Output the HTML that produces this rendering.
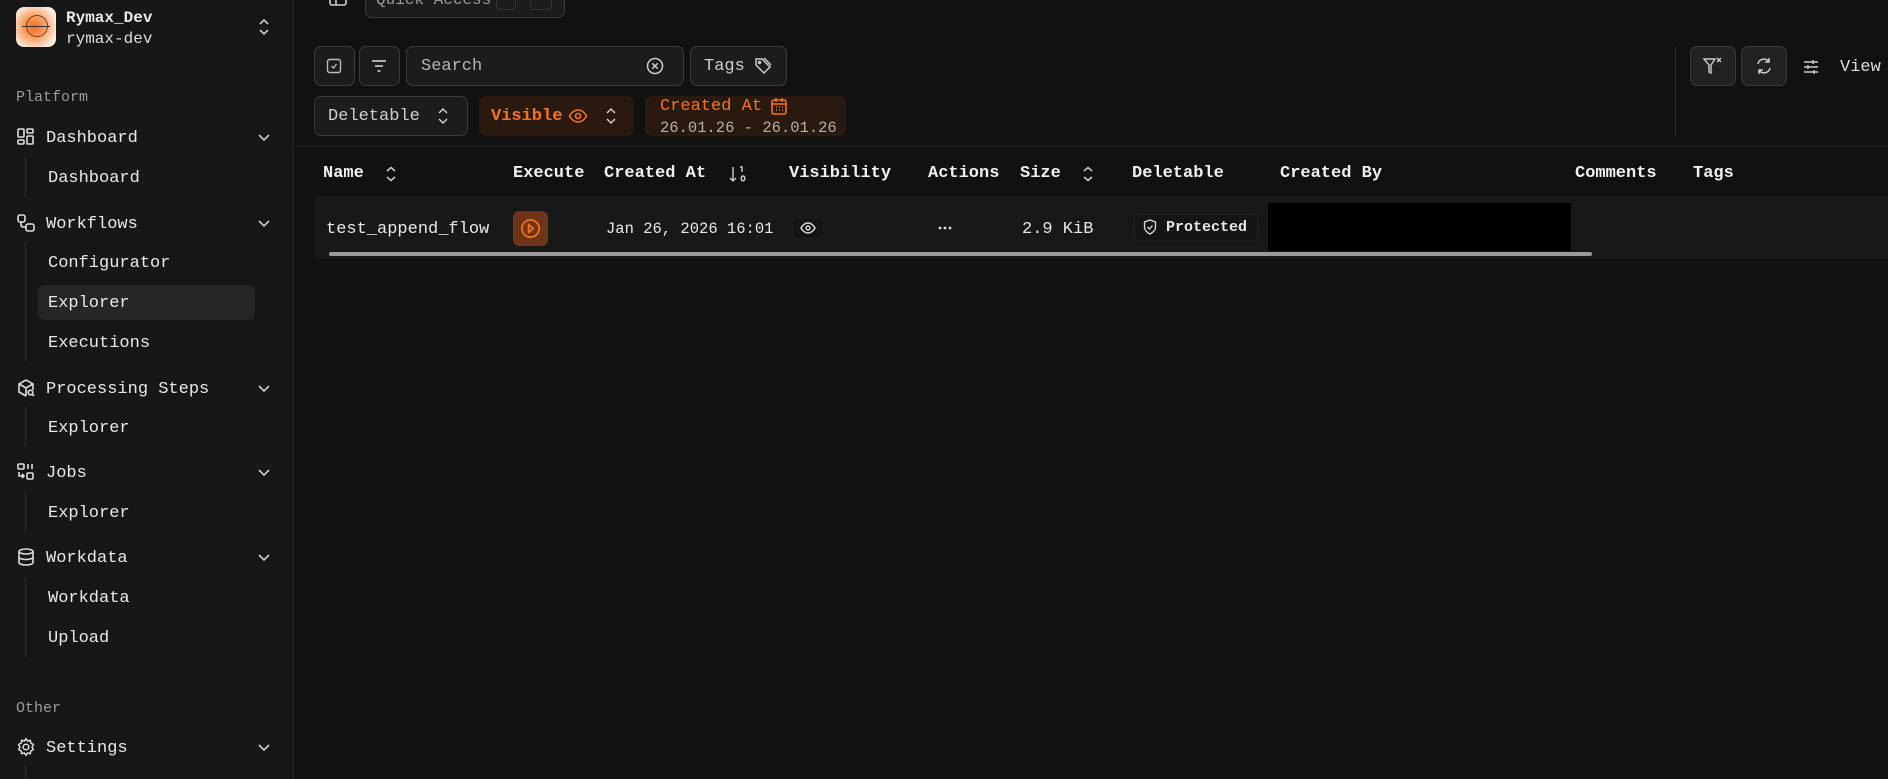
<!DOCTYPE html>
<html><head><meta charset="utf-8"><style>
*{box-sizing:border-box;margin:0;padding:0}
body{width:1888px;height:779px;background:#111111;color:#e8e8e8;font-family:"Liberation Mono","DejaVu Sans Mono",monospace;font-size:17px;position:relative;overflow:hidden}
.a{position:absolute;white-space:nowrap}
.t{position:absolute;height:28px;line-height:28px;white-space:nowrap}
#sb{position:absolute;left:0;top:0;width:294px;height:779px;background:#171717;border-right:1px solid #262626}
.ic{position:absolute;width:20px;height:20px}
.chev{position:absolute;left:256px;width:16px;height:16px}
.vl{position:absolute;left:25px;width:1px;background:#2e2e2e}
.btn{position:absolute;border:1px solid #3a3a3a;background:#1c1c1c;border-radius:7px}
.hd{position:absolute;top:160px;height:28px;line-height:28px;font-weight:bold;color:#f0f0f0}
svg{display:block}
</style></head><body>
<div id="sb">
 <div class="a" style="left:16px;top:7px;width:40px;height:40px;border-radius:8px;background:radial-gradient(circle at 45% 50%,#f26a1d 0,#f7a56b 40%,#fde8d8 75%,#fff 100%)">
  <div class="a" style="left:6px;top:19px;width:28px;height:1px;background:#333"></div>
  <div class="a" style="left:10px;top:8px;width:22px;height:22px;border:1px solid #7a3a14;border-radius:50%"></div>
 </div>
 <div class="t" style="left:66px;top:4px;font-weight:bold;font-size:16px">Rymax_Dev</div>
 <div class="t" style="left:66px;top:25px;font-size:16px;color:#ddd">rymax-dev</div>
 <svg class="a" style="left:256px;top:17px" width="16" height="20" viewBox="0 0 16 20"><path d="M4 7l4-4 4 4M4 13l4 4 4-4" stroke="#ccc" stroke-width="1.6" fill="none"/></svg>
 <div class="t" style="left:16px;top:84px;font-size:15px;color:#9a9a9a">Platform</div>

 <svg class="ic" style="left:16px;top:127px" viewBox="0 0 20 20" fill="none" stroke="#ddd" stroke-width="1.6"><rect x="2" y="2" width="6" height="8" rx="1"/><rect x="11" y="2" width="6" height="4" rx="1"/><rect x="11" y="9" width="6" height="8" rx="1"/><rect x="2" y="13" width="6" height="4" rx="1"/></svg>
 <div class="t" style="left:46px;top:125px">Dashboard</div>
 <svg class="chev" style="top:129px" viewBox="0 0 16 16"><path d="M3 6l5 5 5-5" stroke="#ccc" stroke-width="1.6" fill="none"/></svg>
 <div class="vl" style="top:157px;height:40px"></div>
 <div class="t" style="left:48px;top:165px">Dashboard</div>

 <svg class="ic" style="left:16px;top:213px" viewBox="0 0 20 20" fill="none" stroke="#ddd" stroke-width="1.6"><rect x="2" y="2" width="7" height="7" rx="2"/><rect x="10" y="11" width="8" height="7" rx="2"/><path d="M5 9v3a2 2 0 0 0 2 2h3"/></svg>
 <div class="t" style="left:46px;top:211px">Workflows</div>
 <svg class="chev" style="top:215px" viewBox="0 0 16 16"><path d="M3 6l5 5 5-5" stroke="#ccc" stroke-width="1.6" fill="none"/></svg>
 <div class="vl" style="top:242px;height:120px"></div>
 <div class="t" style="left:48px;top:250px">Configurator</div>
 <div class="a" style="left:38px;top:285px;width:217px;height:35px;background:#262626;border-radius:7px"></div>
 <div class="t" style="left:48px;top:290px">Explorer</div>
 <div class="t" style="left:48px;top:330px">Executions</div>

 <svg class="ic" style="left:16px;top:378px" viewBox="0 0 20 20" fill="none" stroke="#ddd" stroke-width="1.6"><path d="M10 2l7 4v6M10 2L3 6v8l7 4M3 6l7 4 7-4M10 10v8"/><circle cx="14.5" cy="14.5" r="2.3"/><path d="M16 16l2 2"/></svg>
 <div class="t" style="left:46px;top:376px">Processing Steps</div>
 <svg class="chev" style="top:380px" viewBox="0 0 16 16"><path d="M3 6l5 5 5-5" stroke="#ccc" stroke-width="1.6" fill="none"/></svg>
 <div class="vl" style="top:407px;height:40px"></div>
 <div class="t" style="left:48px;top:415px">Explorer</div>

 <svg class="ic" style="left:16px;top:462px" viewBox="0 0 20 20" fill="none" stroke="#ddd" stroke-width="1.6"><rect x="2" y="2" width="6" height="5" rx="1"/><rect x="11" y="11" width="6" height="6" rx="1"/><path d="M12 2v5M16 2v5M3 10v4h5M6 12l2 2-2 2"/></svg>
 <div class="t" style="left:46px;top:460px">Jobs</div>
 <svg class="chev" style="top:464px" viewBox="0 0 16 16"><path d="M3 6l5 5 5-5" stroke="#ccc" stroke-width="1.6" fill="none"/></svg>
 <div class="vl" style="top:492px;height:40px"></div>
 <div class="t" style="left:48px;top:500px">Explorer</div>

 <svg class="ic" style="left:16px;top:547px" viewBox="0 0 20 20" fill="none" stroke="#ddd" stroke-width="1.6"><ellipse cx="10" cy="4.5" rx="7" ry="2.5"/><path d="M3 4.5v11c0 1.4 3 2.5 7 2.5s7-1.1 7-2.5v-11M3 10c0 1.4 3 2.5 7 2.5s7-1.1 7-2.5"/></svg>
 <div class="t" style="left:46px;top:545px">Workdata</div>
 <svg class="chev" style="top:549px" viewBox="0 0 16 16"><path d="M3 6l5 5 5-5" stroke="#ccc" stroke-width="1.6" fill="none"/></svg>
 <div class="vl" style="top:577px;height:80px"></div>
 <div class="t" style="left:48px;top:585px">Workdata</div>
 <div class="t" style="left:48px;top:625px">Upload</div>

 <div class="t" style="left:16px;top:695px;font-size:15px;color:#9a9a9a">Other</div>
 <svg class="ic" style="left:16px;top:737px" viewBox="0 0 20 20" fill="none" stroke="#ddd" stroke-width="1.5"><circle cx="10" cy="10" r="2.8"/><path d="M10 1.8l1.6 2.2 2.7-.6.6 2.7 2.4 1.3-1.2 2.6 1.2 2.6-2.4 1.3-.6 2.7-2.7-.6L10 18.2 8.4 16l-2.7.6-.6-2.7-2.4-1.3L3.9 10 2.7 7.4l2.4-1.3.6-2.7 2.7.6z"/></svg>
 <div class="t" style="left:46px;top:735px">Settings</div>
 <svg class="chev" style="top:739px" viewBox="0 0 16 16"><path d="M3 6l5 5 5-5" stroke="#ccc" stroke-width="1.6" fill="none"/></svg>
 <div class="vl" style="top:765px;height:14px"></div>
</div>

<!-- top -->
<svg class="a" style="left:328px;top:-8px" width="20" height="16" viewBox="0 0 20 16" fill="none" stroke="#ccc" stroke-width="1.6"><rect x="2" y="0" width="16" height="13" rx="2"/><path d="M2 6h16M8 0v13"/></svg>
<div class="btn" style="left:365px;top:-8px;width:200px;height:26px;border-radius:7px"></div>
<div class="t" style="left:376px;top:-14px;color:#9a9a9a;font-size:16px">Quick Access</div>
<div class="a" style="left:496px;top:-8px;width:20px;height:18px;border:1px solid #333;border-radius:4px"></div>
<div class="a" style="left:530px;top:-8px;width:22px;height:18px;border:1px solid #333;border-radius:4px"></div>

<!-- toolbar -->
<div class="btn" style="left:314px;top:46px;width:41px;height:40px"></div>
<svg class="a" style="left:326px;top:58px" width="16" height="16" viewBox="0 0 16 16" fill="none" stroke="#bbb" stroke-width="1.4"><rect x="1.5" y="1.5" width="13" height="13" rx="2"/><path d="M5.5 8l2 2 3-4"/></svg>
<div class="btn" style="left:359px;top:46px;width:41px;height:40px"></div>
<svg class="a" style="left:369px;top:57px" width="20" height="18" viewBox="0 0 20 18" stroke="#ddd" stroke-width="1.6"><path d="M3 4h14M6 9h8M8.5 14h3"/></svg>
<div class="btn" style="left:406px;top:46px;width:278px;height:40px"></div>
<div class="t" style="left:421px;top:53px;color:#b5b5b5">Search</div>
<svg class="a" style="left:646px;top:57px" width="18" height="18" viewBox="0 0 18 18" fill="none" stroke="#ccc" stroke-width="1.5"><circle cx="9" cy="9" r="7.5"/><path d="M6.3 6.3l5.4 5.4M11.7 6.3l-5.4 5.4"/></svg>
<div class="btn" style="left:690px;top:46px;width:97px;height:40px"></div>
<div class="t" style="left:704px;top:53px;color:#cfcfcf">Tags</div>
<svg class="a" style="left:753px;top:56px" width="20" height="20" viewBox="0 0 20 20" fill="none" stroke="#ccc" stroke-width="1.5"><path d="M3 3h6l8 8-6 6-8-8z"/><circle cx="6.5" cy="6.5" r="1"/><path d="M11 2l7 7"/></svg>

<div class="btn" style="left:314px;top:96px;width:154px;height:40px"></div>
<div class="t" style="left:328px;top:103px;color:#cfcfcf">Deletable</div>
<svg class="a" style="left:436px;top:106px" width="14" height="20" viewBox="0 0 14 20"><path d="M3 7l4-4 4 4M3 13l4 4 4-4" stroke="#ccc" stroke-width="1.5" fill="none"/></svg>
<div class="a" style="left:479px;top:96px;width:155px;height:40px;background:#2a190f;border-radius:7px"></div>
<div class="t" style="left:491px;top:103px;color:#f97316;font-weight:bold">Visible</div>
<svg class="a" style="left:568px;top:106px" width="20" height="20" viewBox="0 0 20 20" fill="none" stroke="#f97316" stroke-width="1.6"><path d="M1.5 10s3-6 8.5-6 8.5 6 8.5 6-3 6-8.5 6-8.5-6-8.5-6z"/><circle cx="10" cy="10" r="2.5"/></svg>
<svg class="a" style="left:604px;top:106px" width="14" height="20" viewBox="0 0 14 20"><path d="M3 7l4-4 4 4M3 13l4 4 4-4" stroke="#ccc" stroke-width="1.5" fill="none"/></svg>
<div class="a" style="left:645px;top:96px;width:201px;height:40px;background:#2a190f;border-radius:7px"></div>
<div class="t" style="left:660px;top:93px;color:#f97316">Created At</div>
<svg class="a" style="left:770px;top:96px" width="18" height="20" viewBox="0 0 18 20" fill="none" stroke="#f97316" stroke-width="1.6"><rect x="2" y="4" width="14" height="14" rx="2"/><path d="M2 8h14M6 2v4M12 2v4M6 11h1M9 11h1M12 11h1M6 14h1M9 14h1M12 14h1"/></svg>
<div class="t" style="left:660px;top:118px;color:#b0b0b0;font-size:15.5px;height:20px;line-height:20px">26.01.26 - 26.01.26</div>

<div class="a" style="left:1675px;top:46px;width:1px;height:90px;background:#262626"></div>
<div class="btn" style="left:1690px;top:46px;width:46px;height:40px;background:#222"></div>
<svg class="a" style="left:1702px;top:56px" width="22" height="20" viewBox="0 0 22 20" fill="none" stroke="#ccc" stroke-width="1.4"><path d="M2 3h11l-4 6v8l-2-1V9z"/><path d="M15 2l4 4M19 2l-4 4"/></svg>
<div class="btn" style="left:1741px;top:46px;width:46px;height:40px;background:#222"></div>
<svg class="a" style="left:1754px;top:56px" width="20" height="20" viewBox="0 0 20 20" fill="none" stroke="#ccc" stroke-width="1.5"><path d="M4 8a6 6 0 0 1 11-2M16 12a6 6 0 0 1-11 2M15 2v4h-4M5 18v-4h4"/></svg>
<svg class="a" style="left:1802px;top:58px" width="18" height="18" viewBox="0 0 18 18" stroke="#ccc" stroke-width="1.4"><path d="M2 4h14M2 9h14M2 14h14M11 2v4M6 7v4M12 12v4"/></svg>
<div class="t" style="left:1840px;top:54px;color:#ddd">View</div>

<!-- table -->
<div class="a" style="left:295px;top:146px;width:1593px;height:1px;background:#1f1f1c"></div>
<div class="hd" style="left:323px">Name</div>
<svg class="a" style="left:384px;top:164px" width="14" height="20" viewBox="0 0 14 20"><path d="M3 7l4-3.5 4 3.5M3 13l4 3.5 4-3.5" stroke="#ccc" stroke-width="1.5" fill="none"/></svg>
<div class="hd" style="left:513px">Execute</div>
<div class="hd" style="left:604px">Created At</div>
<svg class="a" style="left:728px;top:164px" width="20" height="20" viewBox="0 0 20 20" fill="none" stroke="#ccc" stroke-width="1.4"><path d="M5 3v14M2 14l3 3 3-3M12 3h2v5M15 12a1.8 2.4 0 1 0 0.01 0"/></svg>
<div class="hd" style="left:789px">Visibility</div>
<div class="hd" style="left:928px">Actions</div>
<div class="hd" style="left:1020px">Size</div>
<svg class="a" style="left:1081px;top:164px" width="14" height="20" viewBox="0 0 14 20"><path d="M3 7l4-3.5 4 3.5M3 13l4 3.5 4-3.5" stroke="#ccc" stroke-width="1.5" fill="none"/></svg>
<div class="hd" style="left:1132px">Deletable</div>
<div class="hd" style="left:1280px">Created By</div>
<div class="hd" style="left:1575px">Comments</div>
<div class="hd" style="left:1693px">Tags</div>

<div class="a" style="left:315px;top:196px;width:1573px;height:63px;background:#181818"></div>
<div class="t" style="left:326px;top:216px">test_append_flow</div>
<div class="a" style="left:513px;top:211px;width:35px;height:35px;background:#6e3418;border-radius:6px"></div>
<svg class="a" style="left:519px;top:217px" width="23" height="23" viewBox="0 0 24 24" fill="none" stroke="#f97316" stroke-width="1.8"><circle cx="12" cy="12" r="9"/><path d="M10 8l5 4-5 4z"/></svg>
<div class="t" style="left:606px;top:215px;font-size:15.5px">Jan 26, 2026 16:01</div>
<div class="a" style="left:792px;top:217px;width:32px;height:22px;border:1px solid #1e1e1e;border-radius:5px;background:#141414"></div>
<svg class="a" style="left:800px;top:221px" width="16" height="14" viewBox="0 0 16 14" fill="none" stroke="#ddd" stroke-width="1.4"><path d="M1 7s2.5-5 7-5 7 5 7 5-2.5 5-7 5-7-5-7-5z"/><circle cx="8" cy="7" r="2"/></svg>
<svg class="a" style="left:937px;top:225px" width="16" height="6" viewBox="0 0 16 6" fill="#ddd"><circle cx="3" cy="3" r="1.4"/><circle cx="8" cy="3" r="1.4"/><circle cx="13" cy="3" r="1.4"/></svg>
<div class="t" style="left:1022px;top:216px">2.9 KiB</div>
<div class="a" style="left:1134px;top:214px;width:124px;height:27px;border:1px solid #1f1f1f;border-radius:5px;background:#151515"></div>
<svg class="a" style="left:1143px;top:219px" width="14" height="16" viewBox="0 0 14 16" fill="none" stroke="#ddd" stroke-width="1.3"><path d="M7 1l5.5 2v5c0 3.5-2.5 5.5-5.5 7-3-1.5-5.5-3.5-5.5-7V3z"/><path d="M4.5 8l2 2 3-3.5"/></svg>
<div class="t" style="left:1166px;top:214px;font-size:15px;font-weight:bold">Protected</div>
<div class="a" style="left:1268px;top:203px;width:303px;height:48px;background:#000"></div>
<div class="a" style="left:329px;top:252px;width:1263px;height:4px;background:#9a9a9a;border-radius:2px"></div>
</body></html>
